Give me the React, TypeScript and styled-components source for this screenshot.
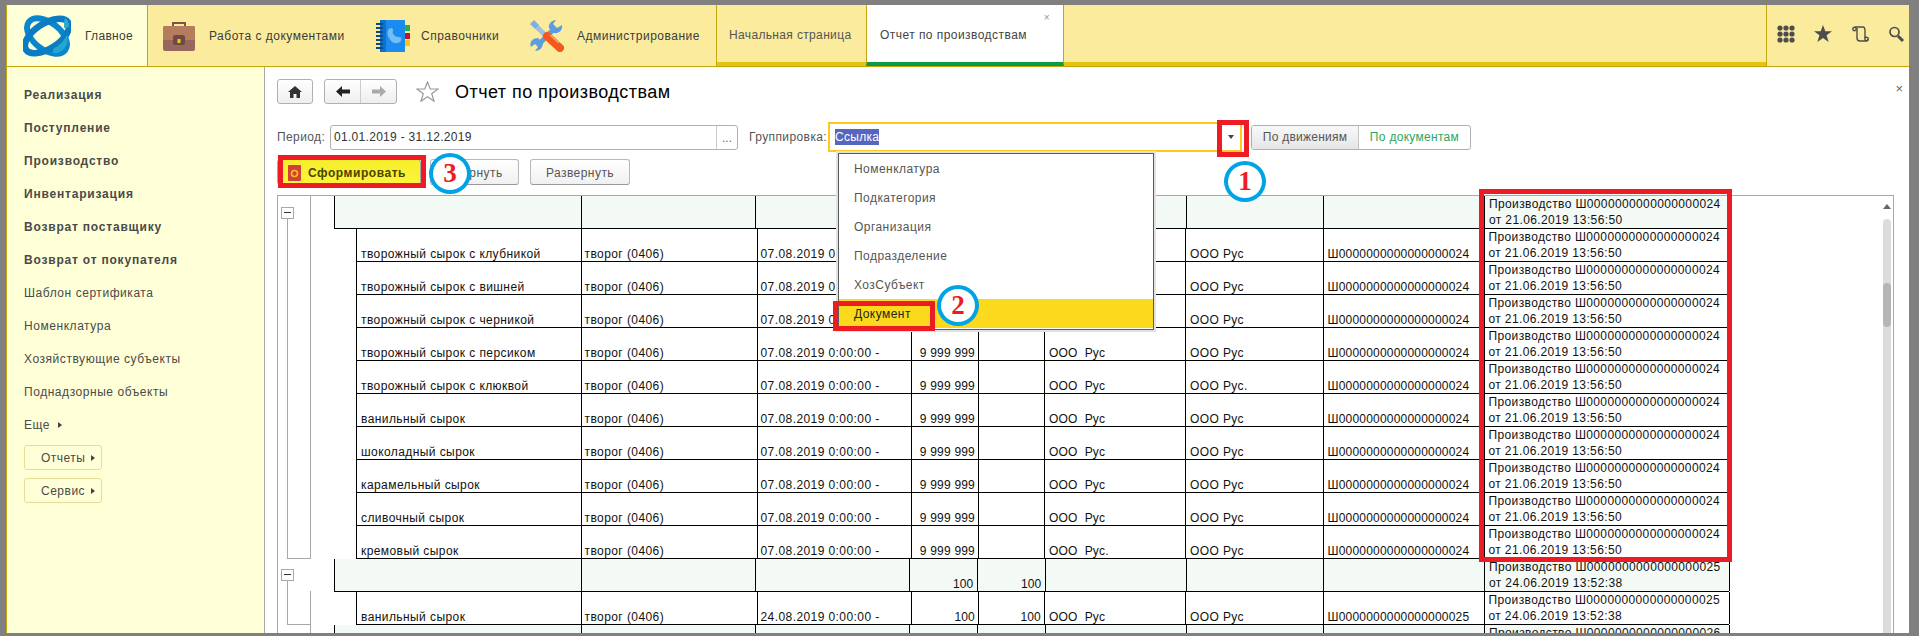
import React from 'react';
import styled, { createGlobalStyle } from 'styled-components';

const Global = createGlobalStyle`
  html, body { margin: 0; padding: 0; background: #808080; }
  body { font-family: "Liberation Sans", Arial, sans-serif; font-size: 12px; color: #3c3c3c; }
  * { box-sizing: border-box; }
`;

const Page = styled.div`
  position: relative; width: 1919px; height: 636px; overflow: hidden;
  background: #808080; padding: 5px 10px 3px 6px;
`;
const Shell = styled.div`display: flex; flex-direction: column; height: 100%; background: #fff;`;

const TopBar = styled.header`
  display: flex; height: 62px; flex: none; background: #fbeb9d; border-bottom: 1px solid #c4a70a;
`;
const HomeCell = styled.div`
  display: flex; align-items: center; width: 142px; flex: none; padding: 0 0 0 16px; gap: 14px;
  background: #ffffd7; border-left: 1px solid #c4a70a; border-right: 1px solid #c4a70a;
`;
const MenuItem = styled.div<{ $w: number; $gap: number }>`
  display: flex; align-items: center; flex: none; width: ${p => p.$w}px; padding-left: 15px; gap: ${p => p.$gap}px;
`;
const MenuText = styled.span<{ $ls?: number }>`font-size: 12px; letter-spacing: ${p => p.$ls ?? 0.5}px; color: #3c3c3c; white-space: nowrap;`;
const TabBar = styled.div`
  display: flex; flex: 1; min-width: 0; border-left: 1px solid #c4a70a; border-right: 1px solid #c4a70a;
`;
const Tab = styled.div`
  display: flex; align-items: center; width: 149px; flex: none; padding: 2px 0 0 12px;
  border-bottom: 4px solid #e3c50c; font-size: 12px; letter-spacing: .35px; color: #555; white-space: nowrap;
`;
const ActiveTab = styled.div`
  position: relative; display: flex; align-items: center; width: 198px; flex: none; padding: 2px 0 0 13px;
  background: #fff; border-left: 1px solid #c4a70a; border-right: 1px solid #c4a70a;
  border-bottom: 4px solid #0a9b48; font-size: 12px; letter-spacing: .45px; color: #444; white-space: nowrap;
`;
const TabClose = styled.span`position: absolute; top: 7px; right: 13px; font-size: 10px; color: #999;`;
const TabFill = styled.div`flex: 1; border-bottom: 4px solid #e3c50c;`;
const ToolIcons = styled.div`
  display: flex; align-items: center; width: 142px; flex: none; padding: 0 4px 4px 10px; justify-content: space-between;
`;

const Body = styled.div`display: flex; flex: 1; min-height: 0;`;
const Sidebar = styled.nav`
  width: 259px; flex: none; padding: 11px 0 0 17px; background: #ffffd7; border-right: 1px solid #a8a8a8;
  border-left: 1px solid #c4a70a;
`;
const SideLink = styled.div<{ $bold?: boolean }>`
  display: flex; align-items: center; height: 33px; gap: 8px; color: #4a4a4a; font-size: 12px;
  font-weight: ${p => (p.$bold ? 700 : 400)}; letter-spacing: ${p => (p.$bold ? '.8px' : '.55px')}; white-space: nowrap;
`;
const Tri = styled.i`
  display: inline-block; width: 0; height: 0; border-left: 4px solid #444;
  border-top: 3px solid transparent; border-bottom: 3px solid transparent;
`;
const SideButton = styled.div`
  display: flex; align-items: center; gap: 6px; width: 78px; height: 25px; margin: 4px 0 8px; padding-left: 16px;
  border: 1px solid #e8dc98; border-radius: 3px; color: #4a4a4a; letter-spacing: .5px; white-space: nowrap;
`;

const Content = styled.main`
  display: flex; flex-direction: column; flex: 1; min-width: 0; padding: 12px 15px 0 12px; position: relative;
`;
const TitleRow = styled.div`display: flex; align-items: center; height: 25px; flex: none;`;
const IconBtn = styled.div<{ $w: number }>`
  display: flex; align-items: center; justify-content: center; width: ${p => p.$w}px; height: 25px;
  border: 1px solid #b0b0b0; border-radius: 3px; background: linear-gradient(#fff, #eee);
`;
const NavGroup = styled.div`
  display: flex; width: 73px; height: 25px; margin-left: 11px; border: 1px solid #b0b0b0; border-radius: 3px;
  background: linear-gradient(#fff, #eee);
`;
const NavPart = styled.div<{ $line?: boolean }>`
  flex: 1; display: flex; align-items: center; justify-content: center;
  border-right: ${p => (p.$line ? '1px solid #ccc' : 'none')};
`;
const StarWrap = styled.div`margin: 0 16px 0 19px; display: flex;`;
const Title = styled.h1`margin: 2px 0 0; font-size: 18px; font-weight: 400; letter-spacing: .45px; color: #000; white-space: nowrap;`;
const CloseForm = styled.span`position: absolute; top: 14px; right: 6px; font-size: 13px; color: #666;`;

const FilterRow = styled.div`display: flex; align-items: center; height: 30px; margin-top: 18px; flex: none;`;
const FieldLabel = styled.label<{ $w: number }>`width: ${p => p.$w}px; flex: none; color: #555; letter-spacing: .4px; white-space: nowrap;`;
const DateField = styled.div`
  display: flex; width: 408px; height: 25px; border: 1px solid #b0b0b0; border-radius: 3px; flex: none;
  color: #333; align-items: stretch; margin-right: 11px;
`;
const DateText = styled.div`flex: 1; padding-left: 3px; line-height: 23px; letter-spacing: .3px;`;
const DateBtn = styled.div`width: 21px; border-left: 1px solid #ccc; text-align: center; line-height: 24px; color: #666;`;
const GroupField = styled.div`
  display: flex; align-items: center; justify-content: space-between; width: 414px; height: 30px; flex: none;
  border: 2px solid #fdc820; padding: 0 6px 0 5px;
`;
const Selected = styled.span`background: #5566c0; color: #fff; padding: 1px 0; line-height: 14px; letter-spacing: .3px;`;
const Caret = styled.i`
  width: 0; height: 0; border-top: 4px solid #444; border-left: 3px solid transparent; border-right: 3px solid transparent;
`;
const Segments = styled.div`
  display: flex; height: 25px; width: 220px; margin-left: 9px; border: 1px solid #b0b0b0; border-radius: 3px; flex: none; overflow: hidden;
`;
const SegOff = styled.div`
  display: flex; align-items: center; justify-content: center; width: 107px; background: linear-gradient(#f8f8f8, #e6e6e6);
  border-right: 1px solid #c4c4c4; color: #555; letter-spacing: .25px; white-space: nowrap;
`;
const SegOn = styled.div`flex: 1; display: flex; align-items: center; justify-content: center; color: #2ea55e; white-space: nowrap; letter-spacing: .3px;`;

const ActionRow = styled.div`display: flex; align-items: center; height: 26px; margin-top: 7px; flex: none;`;
const PrimaryBtn = styled.div`
  display: flex; align-items: center; width: 144px; height: 26px; padding: 1px 0 0 10px; gap: 7px; margin-right: 9px;
  background: linear-gradient(#f6ee2c, #fbf53a); border: 1px solid #a8a8a8; border-radius: 3px;
  font-weight: 700; color: #4a4300; letter-spacing: .55px; white-space: nowrap;
`;
const PlainBtn = styled.div<{ $w: number }>`
  display: flex; align-items: center; justify-content: center; width: ${p => p.$w}px; height: 26px; margin-right: 11px; padding-top: 1px;
  border: 1px solid #b8b8b8; border-bottom-color: #999; border-radius: 3px; background: linear-gradient(#fff, #f0f0f0);
  color: #555; letter-spacing: .45px; white-space: nowrap;
`;

const Pane = styled.section`
  position: relative; display: flex; flex: 1; min-height: 0; margin-top: 10px; overflow: hidden;
  border: 1px solid #a8a8a8; border-bottom: none;
`;
const Rows = styled.div`flex: 1; min-width: 0; padding-left: 56px; overflow: hidden; color: #111;`;
const Row = styled.div<{ $group?: boolean }>`
  display: grid; height: 33px; width: ${p => (p.$group ? 1395 : 1373)}px; margin-left: ${p => (p.$group ? 0 : 22)}px;
  grid-template-columns: ${p => (p.$group
    ? '246.5px 174px 154.5px 67.5px 68px 141px 137.5px 161px 245px'
    : '224.5px 176px 154px 67.5px 66px 141px 137.5px 161px 245px')};
  background: ${p => (p.$group ? '#f3f9f5' : '#fff')};
  border-left: 1px solid #000; border-bottom: 1px solid #000;
`;
const Cell = styled.div<{ $right?: boolean; $pad?: number; $ls?: number }>`
  display: flex; align-items: flex-end; justify-content: ${p => (p.$right ? 'flex-end' : 'flex-start')};
  padding: 0 ${p => (p.$right ? 3 : 0)}px 0 ${p => p.$pad ?? 3}px; border-right: 1px solid #000; height: 32px;
  line-height: 14px; white-space: pre; overflow: hidden; letter-spacing: ${p => p.$ls ?? 0.42}px; min-width: 0;
`;
const DocCell = styled.div`
  padding: 0 0 0 4px; border-right: 1px solid #000; height: 32px; line-height: 16px; white-space: pre; overflow: hidden; letter-spacing: .37px;
`;
const TreeV = styled.div<{ $x: number; $y: number; $h: number }>`
  position: absolute; left: ${p => p.$x}px; top: ${p => p.$y}px; height: ${p => p.$h}px; width: 1px; background: #a8a8a8;
`;
const TreeH = styled.div<{ $x: number; $y: number; $w: number }>`
  position: absolute; left: ${p => p.$x}px; top: ${p => p.$y}px; width: ${p => p.$w}px; height: 1px; background: #a8a8a8;
`;
const MinusBox = styled.div<{ $y: number }>`
  position: absolute; left: 3px; top: ${p => p.$y}px; width: 13px; height: 12px; border: 1px solid #a8a8a8; background: #fff;
  &::after { content: ''; position: absolute; left: 2px; right: 2px; top: 4px; height: 1px; background: #333; }
`;
const Scrollbar = styled.div`
  width: 8px; flex: none; margin: 0 2px 0 3px; display: flex; flex-direction: column; align-items: center; padding-top: 8px;
`;
const ArrowUp = styled.i`
  width: 0; height: 0; border-bottom: 5px solid #666; border-left: 4px solid transparent; border-right: 4px solid transparent; margin-bottom: 10px;
`;
const Track = styled.div`
  width: 8px; flex: 1; background: #dcdcdc; border-radius: 4px 4px 0 0; padding-top: 64px;
`;
const Thumb = styled.div`height: 44px; background: #b5b5b5; border-radius: 4px;`;

const Menu = styled.div`
  position: absolute; left: 836px; top: 151px; width: 320px; height: 181px; padding-top: 1px; z-index: 3;
  background: #fff; border: 2px solid #e2e2e2; box-shadow: inset 0 0 0 1px #5a5a5a;
`;
const MenuRow = styled.div<{ $on?: boolean }>`
  display: flex; align-items: center; height: 29px; margin: 0 1px; padding-left: 15px; font-size: 12px; letter-spacing: .45px;
  color: ${p => (p.$on ? '#222' : '#555')}; background: ${p => (p.$on ? '#fbd91c' : 'transparent')};
`;
const RedBox = styled.div<{ $x: number; $y: number; $w: number; $h: number }>`
  position: absolute; left: ${p => p.$x}px; top: ${p => p.$y}px; width: ${p => p.$w}px; height: ${p => p.$h}px;
  border: 5px solid #ed1c24; z-index: 4; pointer-events: none;
`;
const Badge = styled.div<{ $x: number; $y: number }>`
  position: absolute; left: ${p => p.$x}px; top: ${p => p.$y}px; width: 42px; height: 41px; border: 4px solid #00a4e4; border-radius: 50%;
  background: #fff; z-index: 5; display: flex; align-items: center; justify-content: center;
  font-family: "Liberation Serif", serif; font-weight: 700; font-size: 27px; color: #ed1c24; line-height: 1;
`;

const Logo = () => (
  <svg width="48" height="42" viewBox="0 0 48 42" fill="none">
    <ellipse cx="24" cy="21" rx="23" ry="13.500" transform="rotate(38 24 21)" stroke="#0a86cc" strokeWidth="6" />
    <ellipse cx="24" cy="21" rx="25" ry="12.500" transform="rotate(-33 24 21)" stroke="#0a7cc4" strokeWidth="6.500" />
    <path d="M30 34c6-3 11-8 14-14 1 4 1 7-1 11-3 5-8 8-13 7Z" fill="#26a6cf" />
    <path d="M42 3c3 2 4 5 4 9l-5 1c0-4 0-7 1-10Z" fill="#2ca9cf" />
  </svg>
);
const Briefcase = () => (
  <svg width="32" height="30" viewBox="0 0 32 30">
    <path d="M10 5V2h12v3" fill="none" stroke="#7d5548" strokeWidth="2" />
    <path d="M0 7a2 2 0 0 1 2-2h28a2 2 0 0 1 2 2v21a2 2 0 0 1-2 2H2a2 2 0 0 1-2-2Z" fill="#99685c" />
    <path d="M0 7a2 2 0 0 1 2-2h28a2 2 0 0 1 2 2v12H0Z" fill="#b67c5e" />
    <rect x="10" y="14" width="12" height="10" rx="2" fill="#6d4a45" />
    <rect x="14.500" y="18" width="3" height="4" fill="#f5c518" />
  </svg>
);
const Notebook = () => (
  <svg width="34" height="32" viewBox="0 0 34 32">
    <rect x="4" y="0" width="25" height="32" fill="#1a8cf0" />
    <rect x="4" y="0" width="6" height="32" fill="#0d72cf" />
    {[3, 7, 11, 15, 19, 23, 27].map(y => <rect key={y} x="0" y={y} width="7" height="2" fill="#0f4a78" />)}
    <rect x="29" y="5" width="5" height="6" fill="#23b14d" />
    <rect x="29" y="13" width="5" height="6" fill="#c8102e" />
    <rect x="29" y="20" width="5" height="6" fill="#fcc419" />
    <path d="M13 9c2-2 4-1 4 1 0 2-1 3 1 5s3 2 5 2c3 0 3 3 1 5-5 3-9 0-11-4-2-3-2-7 0-9Z" fill="#74bdf2" />
  </svg>
);
const Tools = () => (
  <svg width="34" height="32" viewBox="0 0 34 32" fill="none">
    <path d="M24 9L8 25" stroke="#5b9de0" strokeWidth="5" />
    <path d="M26 0l-3 4 4 4 5-3c1 5-3 9-8 8l-5-5c-1-4 3-8 7-8Z" fill="#5b9de0" />
    <path d="M1 27c-2-4 1-9 7-9l5 5c0 5-4 8-8 8l3-4-3-3Z" fill="#5b9de0" />
    <path d="M3 3l13 13" stroke="#9cc1e4" strokeWidth="5" />
    <path d="M0 4l4-4 5 5-4 4Z" fill="#7fb0e0" />
    <path d="M17 16l13 12" stroke="#f4581c" strokeWidth="8" strokeLinecap="round" />
    <path d="M20 15l9 8" stroke="#ffa37a" strokeWidth="1.500" />
  </svg>
);
const GridIcon = () => (
  <svg width="18" height="18" viewBox="0 0 18 18" fill="#4d4d4d">
    {[3, 9, 15].flatMap(y => [3, 9, 15].map(x => <circle key={`${x}-${y}`} cx={x} cy={y} r="2.600" />))}
  </svg>
);
const StarIcon = () => (
  <svg width="18" height="17" viewBox="0 0 18 17"><path d="M9 0l2.300 6.200H18l-5.400 4 2 6.800L9 13l-5.600 4 2-6.800L0 6.200h6.700Z" fill="#4d4d4d" /></svg>
);
const ScrollIcon = () => (
  <svg width="17" height="16" viewBox="0 0 17 16" fill="none" stroke="#4d4d4d" strokeWidth="1.400">
    <path d="M3 1h8c2 0 2 2 2 4v7" /><path d="M5 2v10c0 2 1 3 3 3h6c2 0 2-1 2-2" /><circle cx="2.500" cy="3" r="1.700" /><circle cx="14.500" cy="13" r="1.700" />
  </svg>
);
const SearchIcon = () => (
  <svg width="17" height="16" viewBox="0 0 17 16" fill="none" stroke="#4d4d4d">
    <circle cx="6.500" cy="6" r="4.500" strokeWidth="1.700" /><path d="M10 10l5 5" strokeWidth="3" />
  </svg>
);
const HomeIcon = () => (
  <svg width="14" height="12" viewBox="0 0 14 12"><path d="M7 0l7 6h-2v6H8.500V8h-3v4H2V6H0Z" fill="#333" /></svg>
);
const ArrowIcon = ({ left, color }: { left?: boolean; color: string }) => (
  <svg width="14" height="11" viewBox="0 0 14 11"><path d={left ? 'M0 5.500L6 0v3.500h8v4H6V11Z' : 'M14 5.500L8 0v3.500H0v4h8V11Z'} fill={color} /></svg>
);
const OutlineStar = () => (
  <svg width="23" height="21" viewBox="0 0 23 21"><path d="M11.500 1l2.700 7h7.800l-6.300 4.800 2.400 7.500-6.600-4.600-6.600 4.600 2.400-7.500L1 8h7.800Z" fill="#fff" stroke="#9a9a9a" strokeWidth="1.200" /></svg>
);
const ReportIcon = () => (
  <svg width="13" height="16" viewBox="0 0 13 16"><rect width="13" height="16" rx="1" fill="#d2403a" /><circle cx="6.500" cy="8.500" r="3" fill="none" stroke="#f5c518" strokeWidth="1.600" /></svg>
);

const doc24 = 'Производство Ш0000000000000000024\nот 21.06.2019 13:56:50';
const doc25 = 'Производство Ш0000000000000000025\nот 24.06.2019 13:52:38';

type D = { name: string; org1?: string; org2?: string };
const items: D[] = [
  { name: 'творожный сырок с клубникой' },
  { name: 'творожный сырок с вишней' },
  { name: 'творожный сырок с черникой' },
  { name: 'творожный сырок с персиком' },
  { name: 'творожный сырок с клюквой', org2: 'ООО Рус.' },
  { name: 'ванильный сырок' },
  { name: 'шоколадный сырок' },
  { name: 'карамельный сырок' },
  { name: 'сливочный сырок' },
  { name: 'кремовый сырок', org1: 'ООО  Рус.' },
];

const DataRow = ({ name, date, qty1, qty2, org1, org2, code, doc }: {
  name: string; date: string; qty1: string; qty2: string; org1: string; org2: string; code: string; doc: string;
}) => (
  <Row>
    <Cell $pad={4}>{name}</Cell>
    <Cell>творог (0406)</Cell>
    <Cell>{date}</Cell>
    <Cell $right $ls={0.2}>{qty1}</Cell>
    <Cell $right $ls={0.2}>{qty2}</Cell>
    <Cell $pad={4} $ls={0.2}>{org1}</Cell>
    <Cell $pad={4} $ls={0.4}>{org2}</Cell>
    <Cell $pad={4} $ls={0.2}>{code}</Cell>
    <DocCell>{doc}</DocCell>
  </Row>
);
const GroupRow = ({ qty, doc }: { qty?: string; doc: string }) => (
  <Row $group>
    <Cell /><Cell /><Cell />
    <Cell $right $ls={0.2}>{qty}</Cell>
    <Cell $right $ls={0.2}>{qty}</Cell>
    <Cell /><Cell /><Cell />
    <DocCell>{doc}</DocCell>
  </Row>
);

export default function App() {
  return (
    <Page>
      <Global />
      <Shell>
        <TopBar>
          <HomeCell><Logo /><MenuText $ls={0.3}>Главное</MenuText></HomeCell>
          <MenuItem $w={213} $gap={14}><Briefcase /><MenuText>Работа с документами</MenuText></MenuItem>
          <MenuItem $w={154} $gap={11}><Notebook /><MenuText>Справочники</MenuText></MenuItem>
          <MenuItem $w={201} $gap={13}><Tools /><MenuText>Администрирование</MenuText></MenuItem>
          <TabBar>
            <Tab>Начальная страница</Tab>
            <ActiveTab>Отчет по производствам<TabClose>×</TabClose></ActiveTab>
            <TabFill />
          </TabBar>
          <ToolIcons><GridIcon /><StarIcon /><ScrollIcon /><SearchIcon /></ToolIcons>
        </TopBar>
        <Body>
          <Sidebar>
            {['Реализация', 'Поступление', 'Производство', 'Инвентаризация', 'Возврат поставщику', 'Возврат от покупателя'].map(t => (
              <SideLink key={t} $bold>{t}</SideLink>
            ))}
            {['Шаблон сертификата', 'Номенклатура', 'Хозяйствующие субъекты', 'Поднадзорные объекты'].map(t => (
              <SideLink key={t}>{t}</SideLink>
            ))}
            <SideLink>Еще <Tri /></SideLink>
            <SideButton>Отчеты <Tri /></SideButton>
            <SideButton>Сервис <Tri /></SideButton>
          </Sidebar>
          <Content>
            <CloseForm>×</CloseForm>
            <TitleRow>
              <IconBtn $w={36}><HomeIcon /></IconBtn>
              <NavGroup>
                <NavPart $line><ArrowIcon left color="#222" /></NavPart>
                <NavPart><ArrowIcon color="#aaa" /></NavPart>
              </NavGroup>
              <StarWrap><OutlineStar /></StarWrap>
              <Title>Отчет по производствам</Title>
            </TitleRow>
            <FilterRow>
              <FieldLabel $w={53}>Период:</FieldLabel>
              <DateField>
                <DateText>01.01.2019 - 31.12.2019</DateText>
                <DateBtn>...</DateBtn>
              </DateField>
              <FieldLabel $w={79}>Группировка:</FieldLabel>
              <GroupField><Selected>Ссылка</Selected><Caret /></GroupField>
              <Segments><SegOff>По движениям</SegOff><SegOn>По документам</SegOn></Segments>
            </FilterRow>
            <ActionRow>
              <PrimaryBtn><ReportIcon />Сформировать</PrimaryBtn>
              <PlainBtn $w={89}>Свернуть</PlainBtn>
              <PlainBtn $w={100}>Развернуть</PlainBtn>
            </ActionRow>
            <Pane>
              <TreeV $x={32} $y={0} $h={362} />
              <TreeV $x={32} $y={395} $h={50} />
              <MinusBox $y={11} />
              <TreeV $x={9} $y={23} $h={339} />
              <TreeH $x={9} $y={362} $w={24} />
              <MinusBox $y={373} />
              <TreeV $x={9} $y={385} $h={43} />
              <TreeH $x={9} $y={428} $w={24} />
              <Rows>
                <GroupRow doc={doc24} />
                {items.map(it => (
                  <DataRow key={it.name} name={it.name} date="07.08.2019 0:00:00 -" qty1="9 999 999" qty2=""
                    org1={it.org1 ?? 'ООО  Рус'} org2={it.org2 ?? 'ООО Рус'} code="Ш0000000000000000024" doc={doc24} />
                ))}
                <GroupRow qty="100" doc={doc25} />
                <DataRow name="ванильный сырок" date="24.08.2019 0:00:00 -" qty1="100" qty2="100"
                  org1="ООО  Рус" org2="ООО Рус" code="Ш0000000000000000025" doc={doc25} />
                <GroupRow doc={'Производство Ш0000000000000000026\nот 24.06.2019 13:52:38'} />
              </Rows>
              <Scrollbar><ArrowUp /><Track><Thumb /></Track></Scrollbar>
            </Pane>
          </Content>
        </Body>
      </Shell>
      <Menu>
        <MenuRow>Номенклатура</MenuRow>
        <MenuRow>Подкатегория</MenuRow>
        <MenuRow>Организация</MenuRow>
        <MenuRow>Подразделение</MenuRow>
        <MenuRow>ХозСубъект</MenuRow>
        <MenuRow $on>Документ</MenuRow>
      </Menu>
      <RedBox $x={1217} $y={120} $w={32} $h={37} />
      <RedBox $x={278} $y={155} $w={148} $h={33} />
      <RedBox $x={833} $y={301} $w={102} $h={30} />
      <RedBox $x={1479} $y={189} $w={253} $h={373} />
      <Badge $x={1224} $y={161}>1</Badge>
      <Badge $x={937} $y={285}>2</Badge>
      <Badge $x={429} $y={153}>3</Badge>
    </Page>
  );
}
